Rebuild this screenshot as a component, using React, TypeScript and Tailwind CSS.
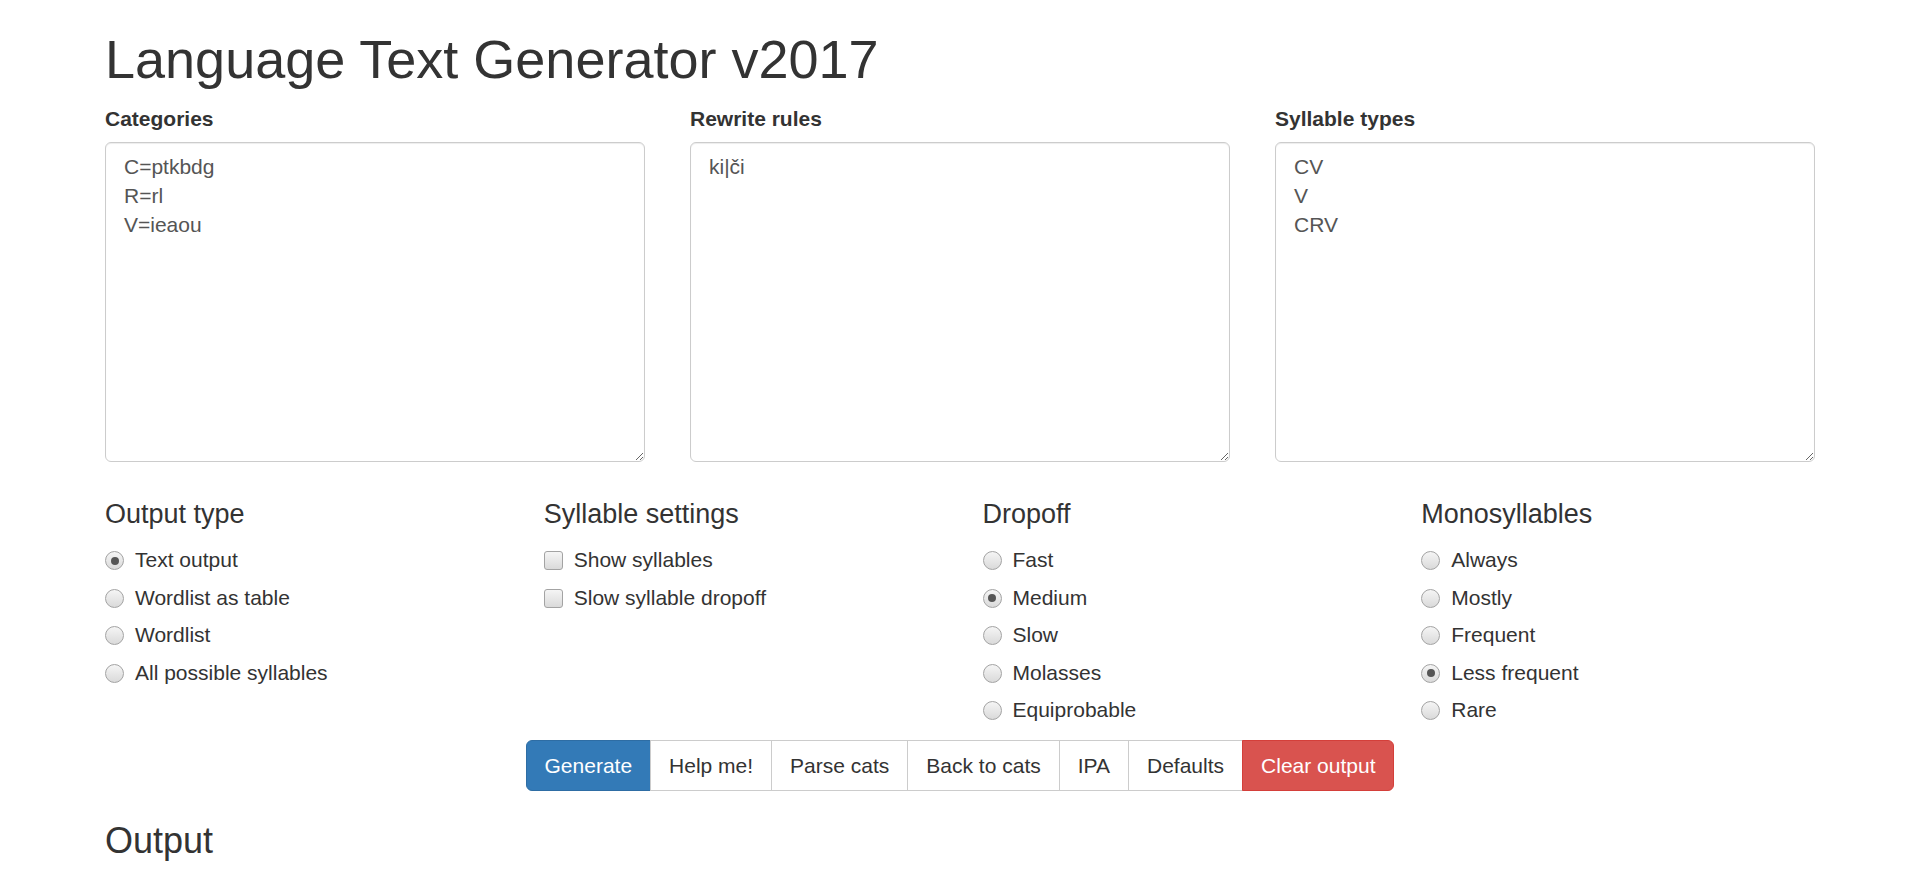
import React from "react";

const font = "font-['Liberation_Sans',Arial,Helvetica,sans-serif]";

function Radio({ label, checked = false }: { label: string; checked?: boolean }) {
  return (
    <label className="flex h-[30px] items-start">
      <span className="mt-[6px] flex h-[19px] w-[19px] shrink-0 items-center justify-center rounded-full border border-[#a3a3a3] bg-linear-to-b from-[#f5f5f5] to-[#dadada]">
        {checked && <span className="h-[8px] w-[8px] rounded-full bg-[#555]" />}
      </span>
      <span className="ml-[11px] leading-[30px]">{label}</span>
    </label>
  );
}

function Checkbox({ label }: { label: string }) {
  return (
    <label className="flex h-[30px] items-start">
      <span className="mt-[6px] h-[19px] w-[19px] shrink-0 rounded-[3px] border border-[#a3a3a3] bg-linear-to-b from-[#f5f5f5] to-[#dadada]" />
      <span className="ml-[11px] leading-[30px]">{label}</span>
    </label>
  );
}

function Field({ label, value }: { label: string; value: string }) {
  return (
    <div className="px-[22.5px] pb-[22.5px]">
      <div className="mb-[7.5px] font-bold leading-[30px]">{label}</div>
      <textarea
        defaultValue={value}
        className="block h-[320px] w-full rounded-[6px] border border-[#ccc] px-[18px] py-[9px] text-[21px] leading-[29px] text-[#555] shadow-[inset_0_1px_1px_rgba(0,0,0,0.075)] outline-none"
      />
    </div>
  );
}

function Group({ title, children }: { title: string; children: React.ReactNode }) {
  return (
    <div className="px-[22.5px]">
      <h4 className="mt-[16px] mb-[15px] text-[27px] leading-[1.1]">{title}</h4>
      <div className="mt-[15px] mb-[15px] flex flex-col gap-[7.5px]">{children}</div>
    </div>
  );
}

const buttons = ["Help me!", "Parse cats", "Back to cats", "IPA", "Defaults"];

export default function App() {
  return (
    <div className={`min-h-screen bg-white text-[21px] text-[#333] ${font}`}>
      <div className="mx-auto w-[1755px] px-[22.5px]">
        <h1 className="mt-[30px] mb-[15px] text-[54px] leading-[1.1]">Language Text Generator v2017</h1>

        <div className="-mx-[22.5px] grid grid-cols-3">
          <Field label="Categories" value={"C=ptkbdg\nR=rl\nV=ieaou"} />
          <Field label="Rewrite rules" value="ki|či" />
          <Field label="Syllable types" value={"CV\nV\nCRV"} />
        </div>

        <div className="-mx-[22.5px] grid grid-cols-4">
          <Group title="Output type">
            <Radio label="Text output" checked />
            <Radio label="Wordlist as table" />
            <Radio label="Wordlist" />
            <Radio label="All possible syllables" />
          </Group>
          <Group title="Syllable settings">
            <Checkbox label="Show syllables" />
            <Checkbox label="Slow syllable dropoff" />
          </Group>
          <Group title="Dropoff">
            <Radio label="Fast" />
            <Radio label="Medium" checked />
            <Radio label="Slow" />
            <Radio label="Molasses" />
            <Radio label="Equiprobable" />
          </Group>
          <Group title="Monosyllables">
            <Radio label="Always" />
            <Radio label="Mostly" />
            <Radio label="Frequent" />
            <Radio label="Less frequent" checked />
            <Radio label="Rare" />
          </Group>
        </div>

        <div className="flex justify-center">
          <div className="inline-flex">
            <button className="flex h-[51px] items-center rounded-l-[6px] border border-[#2e6da4] bg-[#337ab7] px-[18px] text-white">
              Generate
            </button>
            {buttons.map((b) => (
              <button
                key={b}
                className="-ml-px flex h-[51px] items-center border border-[#ccc] bg-white px-[18px] text-[#333]"
              >
                {b}
              </button>
            ))}
            <button className="-ml-px flex h-[51px] items-center rounded-r-[6px] border border-[#d43f3a] bg-[#d9534f] px-[18px] text-white">
              Clear output
            </button>
          </div>
        </div>

        <h3 className="mt-[30px] mb-[15px] text-[36px] leading-[1.1]">Output</h3>
      </div>
    </div>
  );
}
